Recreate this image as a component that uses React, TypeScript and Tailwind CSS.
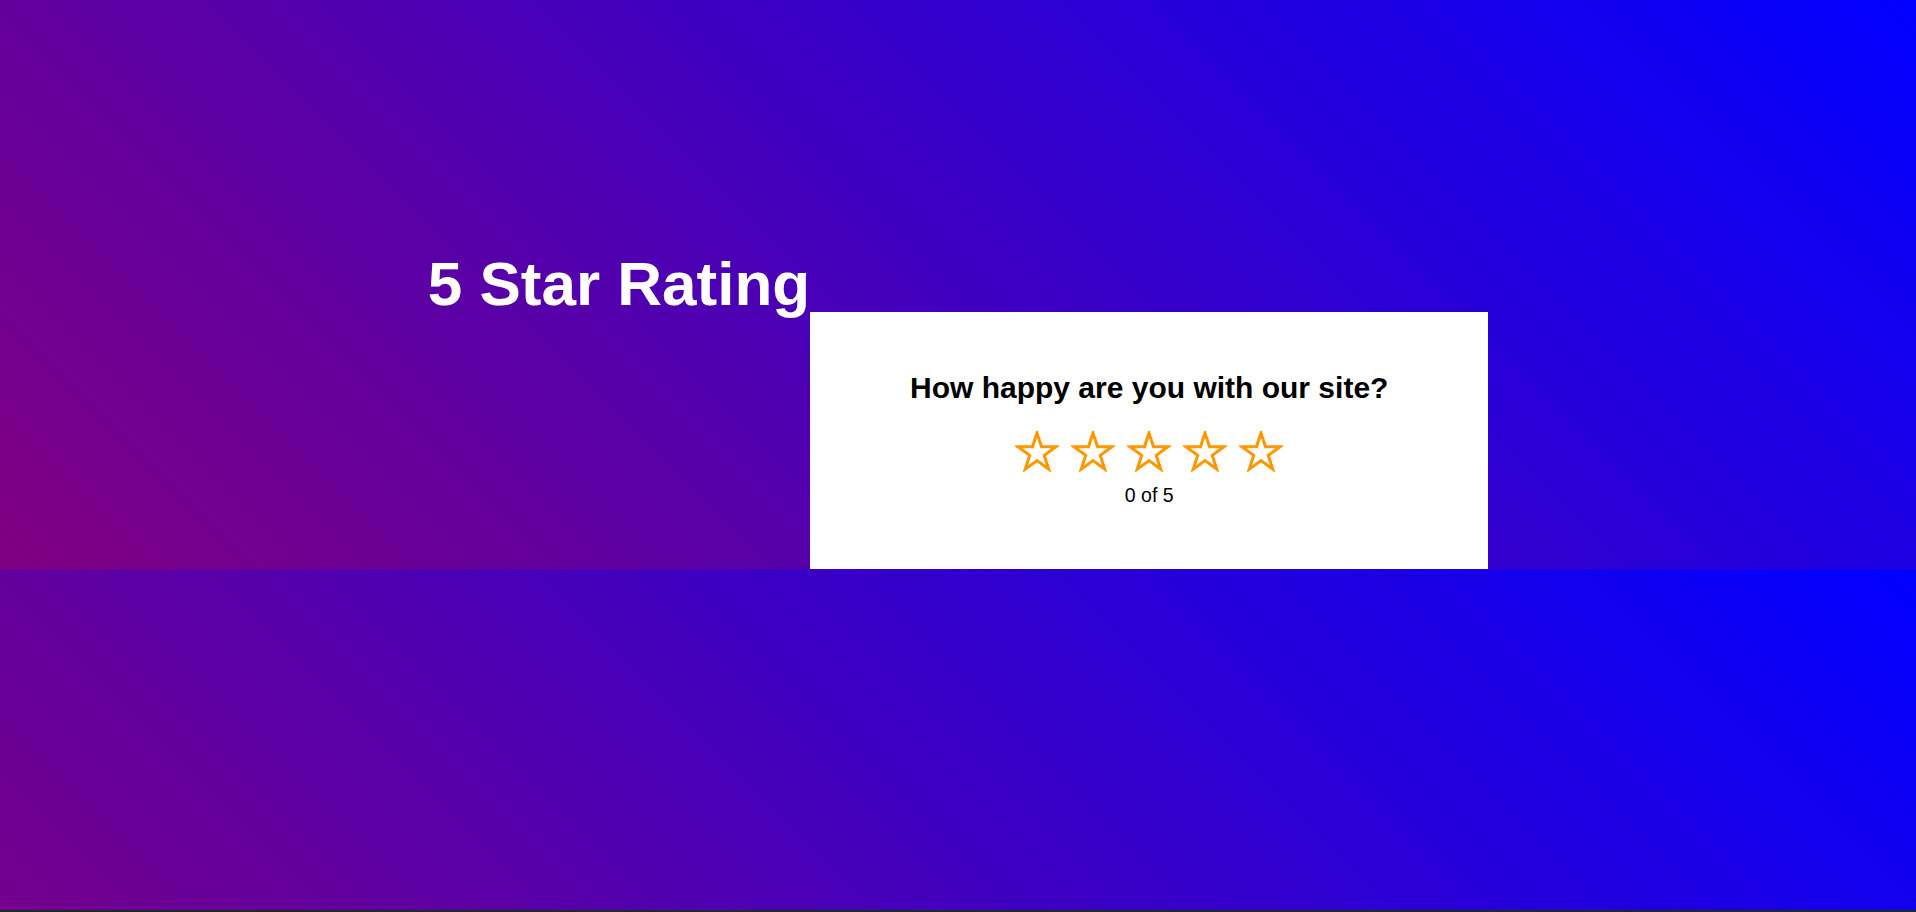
import { useState } from "react";

const STAR_POINTS =
    "22,2 26.49,15.82 41.02,15.82 29.27,24.36 33.76,38.18 22,29.64 10.24,38.18 14.73,24.36 2.98,15.82 17.51,15.82";

function Star({ filled }: { filled: boolean }) {
    return (
        <svg width="44" height="41" viewBox="0 0 44 41" className="block">
            <polygon
                points={STAR_POINTS}
                fill={filled ? "#ff9800" : "none"}
                stroke="#ff9800"
                strokeWidth="3"
                strokeLinejoin="miter"
            />
        </svg>
    );
}

export default function App() {
    const [rating, setRating] = useState(0);

    return (
        <div className="w-full overflow-hidden" style={{ fontFamily: '"Liberation Sans", Arial, sans-serif' }}>
            <div className="h-[910px] w-full bg-[linear-gradient(45deg,#800080,#0000ff)] bg-[length:100%_569px] bg-repeat-y">
                <div className="flex items-start justify-center">
                    <h1 className="mt-[253px] text-[62px] font-bold leading-none text-white whitespace-nowrap">
                        5 Star Rating
                    </h1>
                    <div className="mt-[312px] flex h-[257px] w-[678px] flex-col items-center bg-white">
                        <h2 className="mt-[61px] text-[30px] font-bold leading-none text-black">
                            How happy are you with our site?
                        </h2>
                        <div className="mt-[28px] flex gap-[12px]">
                            {[1, 2, 3, 4, 5].map((n) => (
                                <button key={n} className="cursor-pointer" onClick={() => setRating(n)}>
                                    <Star filled={n <= rating} />
                                </button>
                            ))}
                        </div>
                        <p className="mt-[14px] text-[19.5px] leading-none text-black">{rating} of 5</p>
                    </div>
                </div>
            </div>
            <div className="h-[2px] w-full bg-[#1f2a2a]" />
        </div>
    );
}
